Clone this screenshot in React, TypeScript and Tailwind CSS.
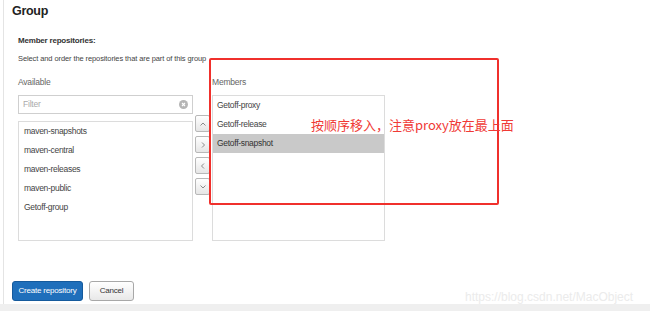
import React from 'react';

const available = ['maven-snapshots', 'maven-central', 'maven-releases', 'maven-public', 'Getoff-group'];
const members = ['Getoff-proxy', 'Getoff-release', 'Getoff-snapshot'];

// small chevron used on the order / move buttons
function Chevron({ dir }: { dir: 'up' | 'down' | 'left' | 'right' }) {
  const d = {
    up: 'M1.5 5.5 L4 3 L6.5 5.5',
    down: 'M1.5 2.5 L4 5 L6.5 2.5',
    right: 'M3 1.5 L5.5 4 L3 6.5',
    left: 'M5 1.5 L2.5 4 L5 6.5',
  }[dir];
  return (
    <svg width="8" height="8" viewBox="0 0 8 8" fill="none">
      <path d={d} stroke="#8a8a8a" strokeWidth="1" />
    </svg>
  );
}

function MoveButton({ dir }: { dir: 'up' | 'down' | 'left' | 'right' }) {
  return (
    <button className="flex h-[17px] w-[15px] items-center justify-center rounded-[2px] border border-[#b8b8b8] bg-gradient-to-b from-white to-[#e6e6e6] p-0">
      <Chevron dir={dir} />
    </button>
  );
}

export default function App() {
  return (
    <div
      className="relative flex h-[311px] w-[650px] flex-col overflow-hidden bg-white text-[#333]"
      style={{ fontFamily: '"Liberation Sans", Arial, sans-serif' }}
    >
      <div className="ml-[3px] flex-1 border-l border-[#e4e4e4]">
        <h1 className="ml-[8px] mt-[4px] text-[12.5px] font-bold leading-[15px] tracking-[-0.3px] text-[#222]">Group</h1>

        <div className="ml-[14px] mt-[17px]">
          <div className="text-[8px] font-bold leading-[10px] tracking-[-0.2px] text-[#333]">Member repositories:</div>
          <div className="mt-[8px] text-[7.5px] leading-[10px] tracking-[-0.1px] text-[#444]">
            Select and order the repositories that are part of this group
          </div>

          <div className="mt-[12px] flex">
            {/* Available */}
            <div className="w-[175px]">
              <div className="text-[8.5px] leading-[12px] tracking-[-0.2px] text-[#666]">Available</div>
              <div className="mt-[7px] flex h-[19px] items-center justify-between border border-[#cfcfcf] pl-[4px] pr-[4px]">
                <span className="text-[8.5px] tracking-[-0.2px] text-[#aaa]">Filter</span>
                <span className="flex h-[9px] w-[9px] items-center justify-center rounded-full bg-[#b5b5b5]">
                  <svg width="5" height="5" viewBox="0 0 5 5">
                    <path d="M1 1 L4 4 M4 1 L1 4" stroke="white" strokeWidth="1.1" />
                  </svg>
                </span>
              </div>
              <div className="mt-[7px] h-[120px] border border-[#dcdcdc]">
                {available.map((name) => (
                  <div key={name} className="flex h-[19px] items-center pl-[5px] text-[8.5px] tracking-[-0.3px] text-[#444]">
                    {name}
                  </div>
                ))}
              </div>
            </div>

            {/* move buttons */}
            <div className="ml-[2px] flex flex-col gap-[4px] pt-[39px]">
              <MoveButton dir="up" />
              <MoveButton dir="right" />
              <MoveButton dir="left" />
              <MoveButton dir="down" />
            </div>

            {/* Members */}
            <div className="ml-[2px] w-[173px]">
              <div className="text-[8.5px] leading-[12px] tracking-[-0.2px] text-[#666]">Members</div>
              <div className="mt-[7px] h-[146px] border border-[#dcdcdc]">
                {members.map((name, i) => (
                  <div
                    key={name}
                    className={
                      i === 2
                        ? 'flex h-[19px] items-center bg-[#c9c9c9] pl-[4px] text-[8.5px] tracking-[-0.3px] text-[#333]'
                        : 'flex h-[19px] items-center pl-[4px] text-[8.5px] tracking-[-0.3px] text-[#444]'
                    }
                  >
                    {name}
                  </div>
                ))}
              </div>
            </div>
          </div>
        </div>

        <div className="ml-[8px] mt-[40px] flex gap-[6px]">
          <button className="h-[20px] w-[71px] rounded-[3px] border border-[#155a9c] bg-[#1f6fbb] p-0 text-[8px] tracking-[-0.2px] text-white">
            Create repository
          </button>
          <button className="h-[20px] w-[45px] rounded-[3px] border border-[#a8a8a8] bg-gradient-to-b from-white to-[#e8e8e8] p-0 text-[8px] tracking-[-0.2px] text-[#333]">
            Cancel
          </button>
        </div>
      </div>
      <div className="h-[7px] bg-[#efefef]" />

      {/* annotation drawn over the screenshot */}
      <div className="absolute left-[209px] top-[58px] h-[147px] w-[290px] rounded-[2px] border-2 border-[#f0302c]" />
      <div
        className="absolute left-[311px] top-[117px] text-[13px] leading-[16px] text-[#f03a36]"
        style={{ fontFamily: '"Noto Sans CJK SC", "Noto Sans", sans-serif' }}
      >
        按顺序移入，注意proxy放在最上面
      </div>
      <div className="absolute left-[465px] top-[290px] text-[12px] leading-[14px] text-[#ebebeb]">
        https://blog.csdn.net/MacObject
      </div>
    </div>
  );
}
